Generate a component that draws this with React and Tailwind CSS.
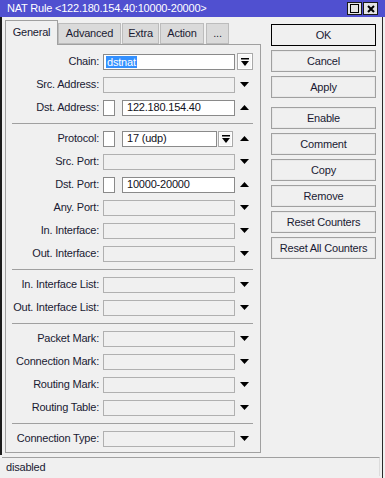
import React from 'react';

const TriDown = () => (
  <svg width="9" height="5" viewBox="0 0 9 5"><polygon points="0,0 9,0 4.5,5" fill="#000" /></svg>
);
const TriUp = () => (
  <svg width="9" height="5" viewBox="0 0 9 5"><polygon points="0,5 9,5 4.5,0" fill="#000" /></svg>
);

// small combo button: bar above a down arrow
const DropBtn = ({ className = '' }) => (
  <div className={`flex items-center justify-center border border-[#a9a9a9] bg-[#f7f7f7] shadow-[inset_0_0_0_1px_#ffffff] ${className}`}>
    <svg width="8" height="8" viewBox="0 0 8 8">
      <rect x="0" y="0" width="8" height="1.5" fill="#000" />
      <polygon points="0,3 8,3 4,8" fill="#000" />
    </svg>
  </div>
);

const EmptyField = () => (
  <div className="h-[16px] w-[132px] border border-[#b0b0b0] bg-[#f0f0f0]" />
);

const Check = () => (
  <div className="h-[16px] w-[12px] border border-[#8a8a8a] bg-white shrink-0" />
);

const Row = ({ label, children, icon }) => (
  <div className="flex h-[23px] items-center">
    <div className="w-[93px] text-right whitespace-nowrap">{label}</div>
    <div className="ml-[4px] flex w-[132px] items-center">{children}</div>
    <div className="flex w-[19px] items-center justify-center">{icon}</div>
  </div>
);

const Sep = () => (
  <div className="flex h-[8px] items-center pl-[6px] pr-[7px]">
    <div className="h-px w-full bg-[#a0a0a0]" />
  </div>
);

const Btn = ({ children, primary }) => (
  <div
    className={`flex h-[22px] w-[105px] items-center justify-center bg-[#f0f0f0] ${
      primary ? 'border border-black' : 'border border-[#a0a0a0] shadow-[inset_0_0_0_1px_#e8e8e8]'
    }`}
  >
    {children}
  </div>
);

export default function App() {
  const emptyDown = (label) => (
    <Row label={label} icon={<TriDown />}>
      <EmptyField />
    </Row>
  );

  return (
    <div className="flex h-[478px] w-[385px] flex-col overflow-hidden bg-[#f0f0f0] font-['Liberation_Sans',Arial,sans-serif] text-[11px] tracking-[-0.2px] text-[#1a1a33]">
      {/* title bar */}
      <div className="flex h-[17px] items-center bg-[#5050d0] pl-[7px] pr-[7px] text-white">
        <span className="flex-1 whitespace-nowrap">NAT Rule &lt;122.180.154.40:10000-20000&gt;</span>
        <div className="flex gap-[1px]">
          <div className="flex h-[13px] w-[15px] items-center justify-center border border-[#1a1a1a] bg-[#e4e4e4]">
            <div className="h-[9px] w-[9px] border border-black" />
          </div>
          <div className="flex h-[13px] w-[15px] items-center justify-center border border-[#1a1a1a] bg-[#e4e4e4]">
            <svg width="8" height="8" viewBox="0 0 8 8">
              <path d="M1 1 L7 7 M7 1 L1 7" stroke="#000" strokeWidth="2" />
            </svg>
          </div>
        </div>
      </div>

      {/* body */}
      <div className="mr-[2px] flex h-[438px] border-l-2 border-r border-l-[#1c1c1c] border-r-[#2a2a2a]">
        <div className="ml-[3px] flex w-[256px] flex-col pt-[3px]">
          {/* tabs */}
          <div className="relative z-10 flex h-[24px] items-end">
            <div className="-mb-px flex h-[25px] w-[53px] items-center justify-center border border-b-0 border-[#a0a0a0] bg-[#f0f0f0] pb-[2px]">
              General
            </div>
            <div className="flex h-[21px] w-[63px] items-center justify-center border border-[#bcbcbc] bg-[#dadada]">Advanced</div>
            <div className="ml-px flex h-[21px] w-[37px] items-center justify-center border border-[#bcbcbc] bg-[#dadada]">Extra</div>
            <div className="ml-px flex h-[21px] w-[44px] items-center justify-center border border-[#bcbcbc] bg-[#dadada]">Action</div>
            <div className="ml-[2px] flex h-[21px] w-[23px] items-center justify-center border border-[#bcbcbc] bg-[#dadada]">...</div>
          </div>

          {/* panel */}
          <div className="flex h-[409px] flex-col border border-[#a0a0a0] bg-[#f0f0f0] pt-[5px]">
            <Row label="Chain:" icon={<DropBtn className="h-[17px] w-[16px]" />}>
              <div className="flex h-[16px] w-[132px] items-center border border-[#8a8a8a] bg-white pl-[2px]">
                <span className="bg-[#3390ff] px-px leading-[12px] text-white">dstnat</span>
              </div>
            </Row>
            {emptyDown('Src. Address:')}
            <Row label="Dst. Address:" icon={<TriUp />}>
              <Check />
              <div className="ml-[7px] flex h-[16px] w-[113px] items-center border border-[#8a8a8a] bg-white pl-[4px] text-[#101020]">
                122.180.154.40
              </div>
            </Row>
            <Sep />
            <Row label="Protocol:" icon={<TriUp />}>
              <Check />
              <div className="ml-[7px] flex h-[16px] w-[95px] items-center border border-[#8a8a8a] bg-white pl-[4px] text-[#101020]">
                17 (udp)
              </div>
              <DropBtn className="ml-px h-[16px] w-[15px]" />
            </Row>
            {emptyDown('Src. Port:')}
            <Row label="Dst. Port:" icon={<TriUp />}>
              <Check />
              <div className="ml-[7px] flex h-[16px] w-[113px] items-center border border-[#8a8a8a] bg-white pl-[4px] text-[#101020]">
                10000-20000
              </div>
            </Row>
            {emptyDown('Any. Port:')}
            {emptyDown('In. Interface:')}
            {emptyDown('Out. Interface:')}
            <Sep />
            {emptyDown('In. Interface List:')}
            {emptyDown('Out. Interface List:')}
            <Sep />
            {emptyDown('Packet Mark:')}
            {emptyDown('Connection Mark:')}
            {emptyDown('Routing Mark:')}
            {emptyDown('Routing Table:')}
            <Sep />
            {emptyDown('Connection Type:')}
          </div>
        </div>

        {/* buttons */}
        <div className="ml-[10px] flex flex-col pt-[7px]">
          <div className="flex flex-col gap-[4px]">
            <Btn primary>OK</Btn>
            <Btn>Cancel</Btn>
            <Btn>Apply</Btn>
          </div>
          <div className="mt-[9px] flex flex-col gap-[4px]">
            <Btn>Enable</Btn>
            <Btn>Comment</Btn>
            <Btn>Copy</Btn>
            <Btn>Remove</Btn>
            <Btn>Reset Counters</Btn>
            <Btn>Reset All Counters</Btn>
          </div>
        </div>
      </div>

      {/* status bar */}
      <div className="mr-[2px] flex h-[23px] border-r border-r-[#2a2a2a] pl-[2px] pt-[2px]">
        <div className="mr-[2px] flex h-[19px] flex-1 items-center border-t border-r border-t-[#a0a0a0] border-r-[#dcdcdc] pl-[4px]">
          disabled
        </div>
      </div>
    </div>
  );
}
